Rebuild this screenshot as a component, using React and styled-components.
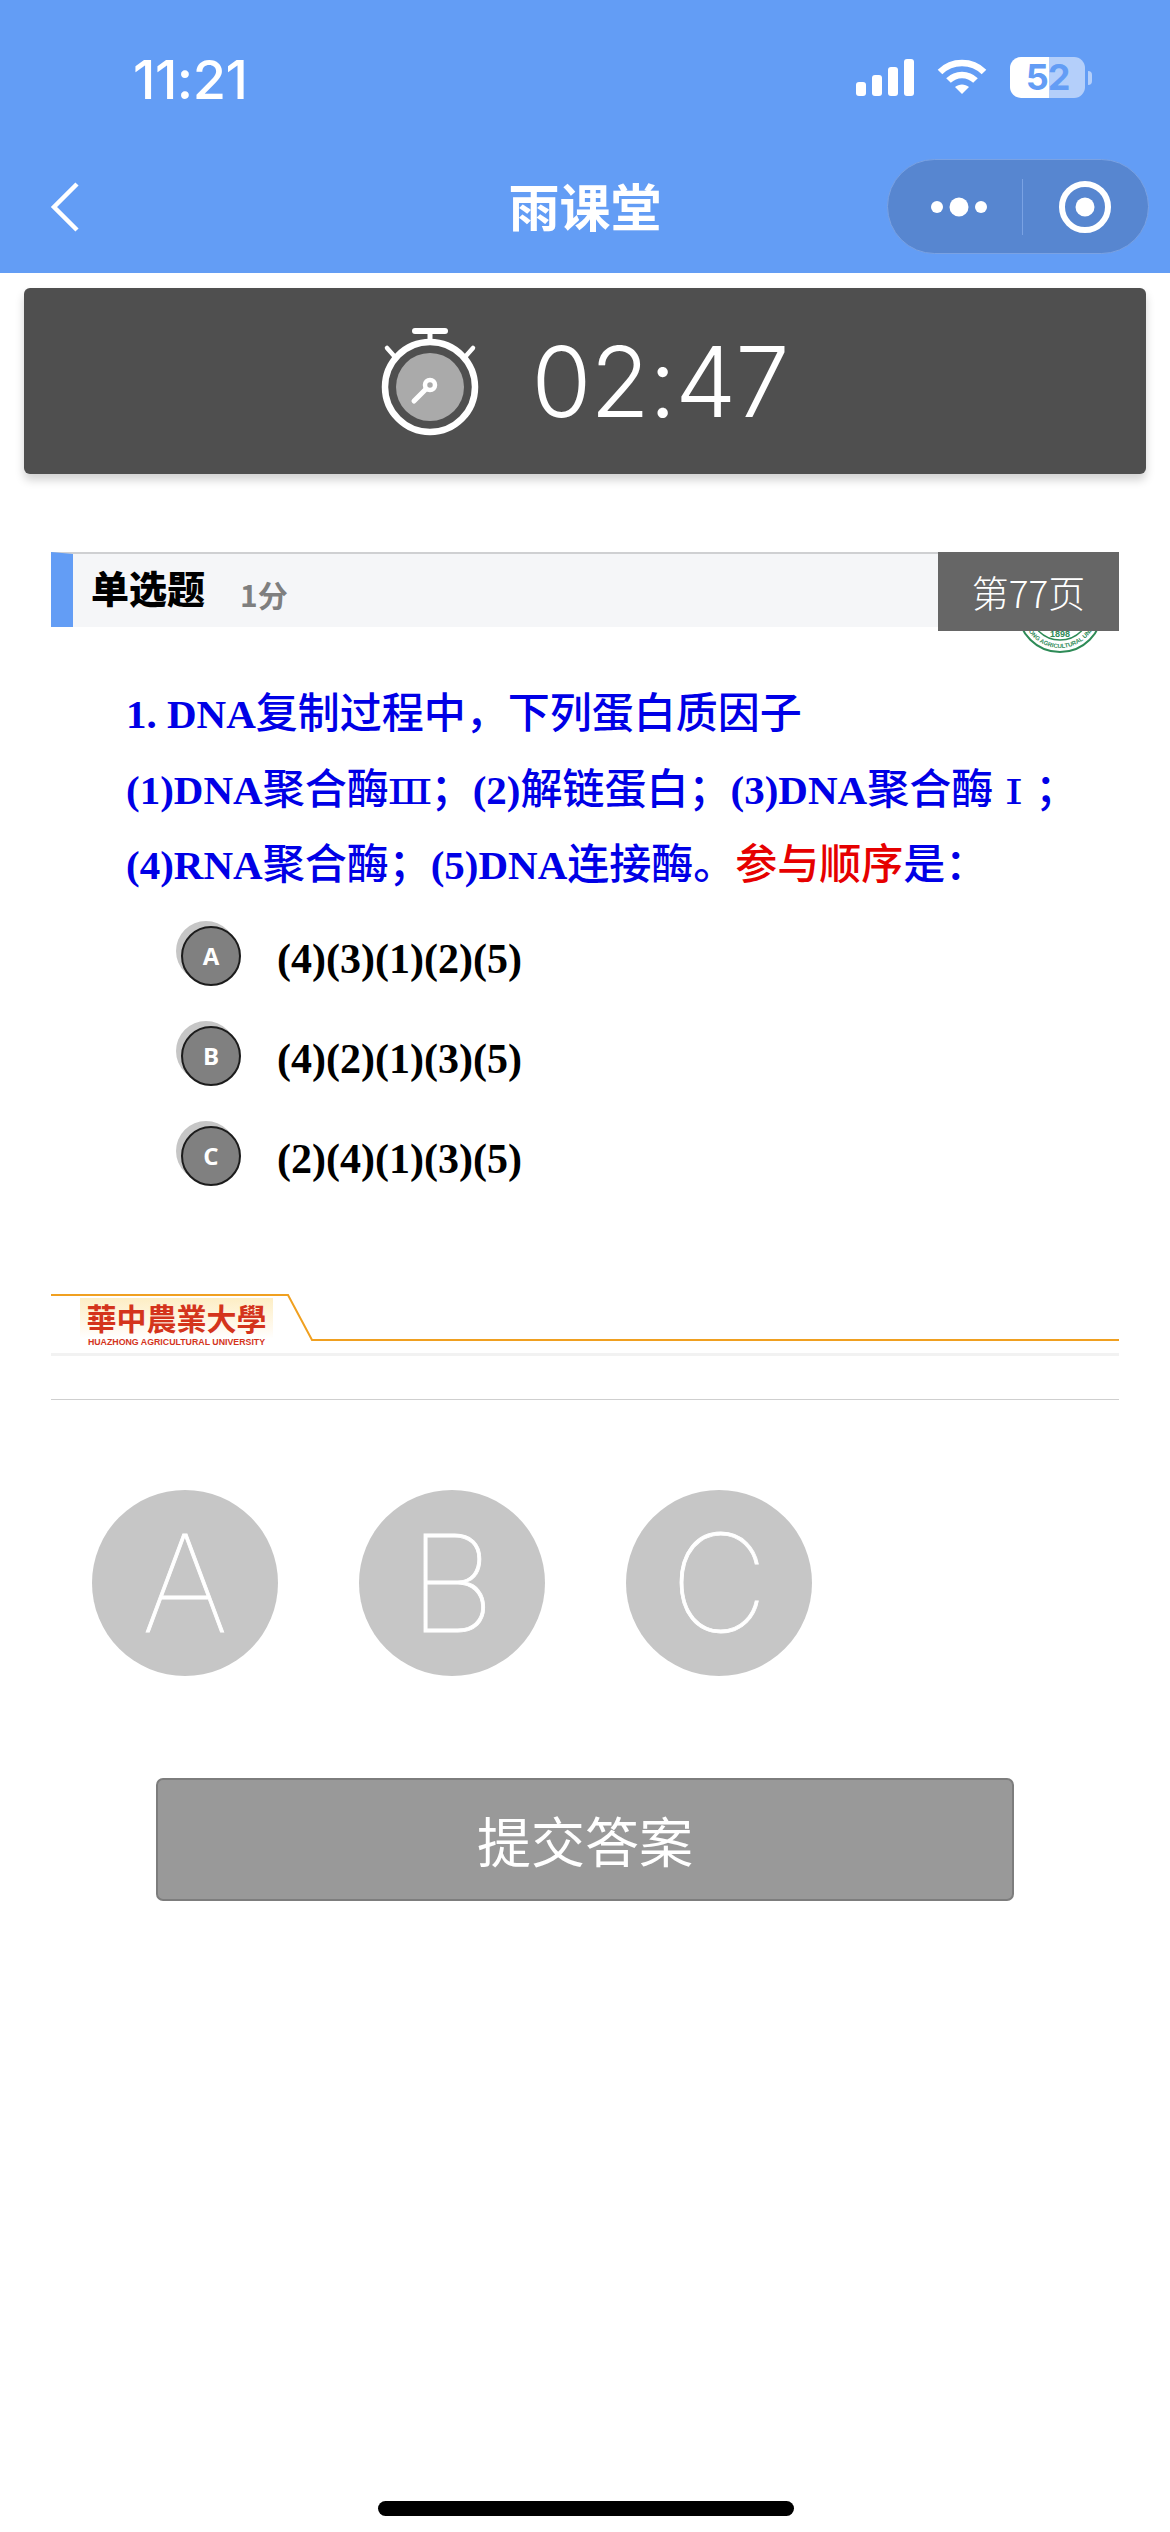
import React from "react";
import styled, { createGlobalStyle } from "styled-components";

const GlobalStyle = createGlobalStyle`
  html, body {
    margin: 0;
    padding: 0;
    background: #fff;
    font-family: "Noto Sans CJK SC", "Inter", sans-serif;
  }
`;

const Page = styled.div`
  position: relative;
  width: 1170px;
  height: 2532px;
  background: #fff;
  overflow: hidden;
`;

const Header = styled.header`
  height: 273px;
  background: #639df5;
  color: #fff;
  display: flex;
  flex-direction: column;
`;

const StatusBar = styled.div`
  height: 158px;
  box-sizing: border-box;
  padding: 0 78px 3px 133px;
  display: flex;
  align-items: center;
  justify-content: space-between;
`;

const Clock = styled.div`
  font-family: "Inter", sans-serif;
  font-size: 54px;
  font-weight: 500;
  letter-spacing: -0.5px;
  margin-top: 3px;
`;

const StatusIcons = styled.div`
  display: flex;
  align-items: center;
  gap: 23px;
`;

const Battery = styled.div`
  width: 75px;
  height: 41px;
  border-radius: 11px;
  background: linear-gradient(90deg, #fff 0 52%, #b4cffa 52% 100%);
  color: #639df5;
  font-family: "Inter", sans-serif;
  font-size: 36px;
  font-weight: 700;
  letter-spacing: -1px;
  line-height: 41px;
  text-align: center;
`;

const BatteryCap = styled.div`
  width: 4px;
  height: 14px;
  margin-left: -20px;
  border-radius: 0 5px 5px 0;
  background: #b4cffa;
`;

const NavBar = styled.div`
  position: relative;
  height: 115px;
  display: flex;
  align-items: center;
  justify-content: center;
`;

const BackIcon = styled.svg`
  position: absolute;
  left: 48px;
  top: 24px;
`;

const NavTitle = styled.div`
  font-size: 51px;
  font-weight: 700;
  margin-bottom: 22px;
`;

const Capsule = styled.div`
  position: absolute;
  right: 21px;
  top: 1px;
  width: 262px;
  height: 95px;
  box-sizing: border-box;
  border-radius: 48px;
  background: #5786d0;
  border: 1px solid #7aa2e3;
  display: flex;
  align-items: center;
`;

const CapsuleSide = styled.div`
  flex: 1;
  display: flex;
  align-items: center;
  justify-content: center;
  height: 56px;
  padding-left: ${(props) => (props.divided ? "0" : "8px")};
  border-left: ${(props) => (props.divided ? "1px solid #7aa2e3" : "none")};
`;

const TimerBar = styled.div`
  margin: 15px 24px 0;
  height: 186px;
  background: #4f4f4f;
  border-radius: 6px;
  box-shadow: 0 6px 10px rgba(0, 0, 0, 0.18);
  display: flex;
  align-items: center;
  justify-content: center;
  gap: 52px;
  color: #fff;
`;

const TimerText = styled.div`
  font-family: "Inter", sans-serif;
  font-size: 97px;
  font-weight: 300;
  line-height: 1;
  letter-spacing: -1px;
`;

const Slide = styled.section`
  position: relative;
  margin: 78px 51px 0;
  height: 847px;
`;

const TitleBar = styled.div`
  position: relative;
  z-index: 2;
  height: 75px;
  box-sizing: border-box;
  border-top: 2px solid #cfd0d2;
  border-left: 22px solid #639df5;
  background: #f5f6f8;
  padding-left: 18px;
  display: flex;
  align-items: center;
  gap: 35px;
`;

const TitleText = styled.div`
  font-size: 38px;
  font-weight: 900;
  color: #000;
  line-height: 1;
  margin-top: -8px;
`;

const ScoreText = styled.div`
  font-size: 30px;
  font-weight: 700;
  color: #7f7f7f;
  line-height: 1;
  margin-top: 6px;
`;

const PageTag = styled.div`
  position: absolute;
  right: 0;
  top: -2px;
  width: 181px;
  height: 79px;
  background: #666;
  color: #fff;
  font-size: 37px;
  font-weight: 300;
  display: flex;
  align-items: center;
  justify-content: center;
`;

const Seal = styled.svg`
  position: absolute;
  right: 12px;
  top: 53px;
  z-index: 1;
`;

const Question = styled.div`
  padding: 50px 0 0 75px;
  font-family: "Liberation Serif", serif;
  font-size: 41px;
  font-weight: 700;
  color: #0000e6;
  white-space: nowrap;
`;

const QuestionLine = styled.div`
  height: 75.5px;
  line-height: 75.5px;
`;

const CjkRun = styled.span`
  font-family: "Noto Sans CJK SC", sans-serif;
  font-size: 42px;
  font-weight: 500;
  line-height: 1;
  color: ${(props) => props.color || "inherit"};
`;

const Numeral = styled.span`
  display: inline-block;
  width: 42px;
  font-family: "DejaVu Serif", "Liberation Serif", serif;
  font-size: 34px;
  font-weight: 400;
  line-height: 1;
  text-align: center;
  transform: scaleX(1.4);
`;

const Options = styled.div`
  padding: 22px 0 0 125px;
  display: flex;
  flex-direction: column;
  gap: 40px;
`;

const OptionRow = styled.div`
  display: flex;
  align-items: center;
  gap: 36px;
  height: 60px;
`;

const OptionBadge = styled.div`
  width: 60px;
  height: 60px;
  box-sizing: border-box;
  border-radius: 50%;
  background: #808080;
  border: 2px solid #1c1c1c;
  box-shadow: -5px -5px 0 0 #c6c6c6;
  color: #fff;
  font-family: "Open Sans", sans-serif;
  font-size: 24px;
  font-weight: 700;
  display: flex;
  align-items: center;
  justify-content: center;
  margin-left: 5px;
`;

const OptionText = styled.div`
  font-family: "Liberation Serif", serif;
  font-size: 42px;
  font-weight: 700;
  color: #000;
  padding-top: 6px;
`;

const FooterBand = styled.div`
  position: absolute;
  left: 0;
  right: 0;
  top: 742px;
  height: 59px;
  border-bottom: 3px solid #f2f2f2;
`;

const FooterLine = styled.svg`
  position: absolute;
  left: 0;
  top: 0;
`;

const LogoPlate = styled.div`
  position: absolute;
  left: 29px;
  top: 4px;
  width: 193px;
  height: 52px;
  background: linear-gradient(180deg, #fdeec4 0%, #fffaf0 60%, #fff 78%);
  display: flex;
  flex-direction: column;
  align-items: center;
  color: #d4341c;
`;

const LogoCn = styled.div`
  font-family: "Noto Sans CJK TC", sans-serif;
  font-size: 30px;
  font-weight: 700;
  line-height: 38px;
  height: 40px;
`;

const LogoEn = styled.div`
  font-family: "Liberation Sans", sans-serif;
  font-size: 8.8px;
  font-weight: 700;
  line-height: 9px;
  white-space: nowrap;
`;

const Divider = styled.div`
  height: 1px;
  margin: 0 51px;
  background: #cfcfcf;
`;

const AnswerRow = styled.div`
  padding: 90px 0 0 92px;
  display: flex;
  gap: 81px;
`;

const AnswerCircle = styled.div`
  width: 186px;
  height: 186px;
  border-radius: 50%;
  background: #c6c6c6;
  color: #fff;
  font-family: "Inter", sans-serif;
  font-size: 135px;
  font-weight: 100;
  -webkit-text-stroke: 0.8px #fff;
  display: flex;
  align-items: center;
  justify-content: center;
`;

const SubmitButton = styled.button`
  display: flex;
  align-items: center;
  justify-content: center;
  width: 858px;
  height: 123px;
  margin: 102px 0 0 156px;
  padding: 0;
  border: 2px solid #7d7d7d;
  border-radius: 7px;
  background: #999;
  color: #fff;
  font-family: "Noto Sans CJK SC", sans-serif;
  font-size: 54px;
  font-weight: 400;
`;

const HomeIndicator = styled.div`
  position: absolute;
  left: 378px;
  bottom: 16px;
  width: 416px;
  height: 15px;
  border-radius: 8px;
  background: #000;
`;

const options = [
  { key: "A", text: "(4)(3)(1)(2)(5)" },
  { key: "B", text: "(4)(2)(1)(3)(5)" },
  { key: "C", text: "(2)(4)(1)(3)(5)" },
];

function SignalIcon() {
  return (
    <svg width="58" height="37" viewBox="0 0 58 37" fill="#fff">
      <rect x="0" y="23" width="10" height="14" rx="3" />
      <rect x="16" y="16" width="10" height="21" rx="3" />
      <rect x="32" y="8" width="10" height="29" rx="3" />
      <rect x="48" y="0" width="10" height="37" rx="3" />
    </svg>
  );
}

function WifiIcon() {
  return (
    <svg width="50" height="37" viewBox="0 0 50 37" fill="none" stroke="#fff" strokeWidth="6.5">
      <path d="M3 13C15 1 35 1 47 13" />
      <path d="M11.5 21.5C19 14 31 14 38.5 21.5" />
      <path d="M18 28L25 35L32 28C28 24.5 22 24.5 18 28Z" fill="#fff" stroke="none" />
    </svg>
  );
}

function StopwatchIcon() {
  return (
    <svg width="98" height="110" viewBox="0 0 98 110" fill="none" stroke="#fff">
      <circle cx="49" cy="61" r="45" strokeWidth="6.5" />
      <circle cx="49" cy="61" r="34" fill="#aaa" stroke="none" />
      <path d="M34 5H64" strokeWidth="6" strokeLinecap="round" />
      <path d="M49 5V16" strokeWidth="5" />
      <path d="M6 22L14 31M92 22L84 31" strokeWidth="4.5" strokeLinecap="round" />
      <path d="M33 75L44 64" strokeWidth="5" strokeLinecap="round" />
      <circle cx="49" cy="59" r="5" strokeWidth="4.5" fill="#aaa" />
    </svg>
  );
}

function SealIcon() {
  return (
    <Seal width="94" height="60" viewBox="0 0 94 60" fill="none" stroke="#2e8b57">
      <defs>
        <path id="seal-arc" d="M9 5A38 38 0 0 0 85 5" />
      </defs>
      <circle cx="47" cy="5" r="42" strokeWidth="2" />
      <circle cx="47" cy="5" r="30" strokeWidth="1.5" />
      <text x="47" y="32" fontSize="9" fontWeight="700" fill="#2e8b57" stroke="none" textAnchor="middle" fontFamily="Liberation Sans, sans-serif">
        1898
      </text>
      <text fontSize="6" fontWeight="700" fill="#2e8b57" stroke="none" fontFamily="Liberation Sans, sans-serif" textAnchor="middle">
        <textPath href="#seal-arc" startOffset="50%">
          HONG AGRICULTURAL UNIV
        </textPath>
      </text>
    </Seal>
  );
}

function App() {
  return (
    <Page>
      <GlobalStyle />
      <Header>
        <StatusBar>
          <Clock>11:21</Clock>
          <StatusIcons>
            <SignalIcon />
            <WifiIcon />
            <Battery>52</Battery>
            <BatteryCap />
          </StatusIcons>
        </StatusBar>
        <NavBar>
          <BackIcon width="34" height="50" viewBox="0 0 34 50" fill="none" stroke="#fff" strokeWidth="4.5">
            <path d="M29 2L6 25L29 48" />
          </BackIcon>
          <NavTitle>雨课堂</NavTitle>
          <Capsule>
            <CapsuleSide>
              <svg width="58" height="20" viewBox="0 0 58 20" fill="#fff">
                <circle cx="7" cy="10" r="6" />
                <circle cx="29" cy="10" r="9.5" />
                <circle cx="51" cy="10" r="6" />
              </svg>
            </CapsuleSide>
            <CapsuleSide divided>
              <svg width="52" height="52" viewBox="0 0 52 52" fill="none">
                <circle cx="26" cy="26" r="23" stroke="#fff" strokeWidth="6" />
                <circle cx="26" cy="26" r="9.5" fill="#fff" />
              </svg>
            </CapsuleSide>
          </Capsule>
        </NavBar>
      </Header>

      <TimerBar>
        <StopwatchIcon />
        <TimerText>02:47</TimerText>
      </TimerBar>

      <Slide>
        <TitleBar>
          <TitleText>单选题</TitleText>
          <ScoreText>1分</ScoreText>
          <PageTag>第77页</PageTag>
        </TitleBar>
        <SealIcon />
        <Question>
          <QuestionLine>1. DNA<CjkRun>复制过程中，下列蛋白质因子</CjkRun></QuestionLine>
          <QuestionLine>
            (1)DNA<CjkRun>聚合酶</CjkRun><Numeral>Ⅲ</Numeral><CjkRun>；</CjkRun>(2)<CjkRun>解链蛋白；</CjkRun>(3)DNA<CjkRun>聚合酶</CjkRun><Numeral>Ⅰ</Numeral><CjkRun>；</CjkRun>
          </QuestionLine>
          <QuestionLine>
            (4)RNA<CjkRun>聚合酶；</CjkRun>(5)DNA<CjkRun>连接酶。</CjkRun><CjkRun color="#e60000">参与顺序</CjkRun><CjkRun>是：</CjkRun>
          </QuestionLine>
        </Question>
        <Options>
          {options.map((option) => (
            <OptionRow key={option.key}>
              <OptionBadge>{option.key}</OptionBadge>
              <OptionText>{option.text}</OptionText>
            </OptionRow>
          ))}
        </Options>
        <FooterBand>
          <FooterLine width="1068" height="50" viewBox="0 0 1068 50" fill="none" stroke="#f0a020" strokeWidth="2">
            <path d="M0 1H237L261 46H1068" />
          </FooterLine>
          <LogoPlate>
            <LogoCn>華中農業大學</LogoCn>
            <LogoEn>HUAZHONG AGRICULTURAL UNIVERSITY</LogoEn>
          </LogoPlate>
        </FooterBand>
      </Slide>

      <Divider />

      <AnswerRow>
        {options.map((option) => (
          <AnswerCircle key={option.key}>{option.key}</AnswerCircle>
        ))}
      </AnswerRow>

      <SubmitButton>提交答案</SubmitButton>

      <HomeIndicator />
    </Page>
  );
}

export default App;
